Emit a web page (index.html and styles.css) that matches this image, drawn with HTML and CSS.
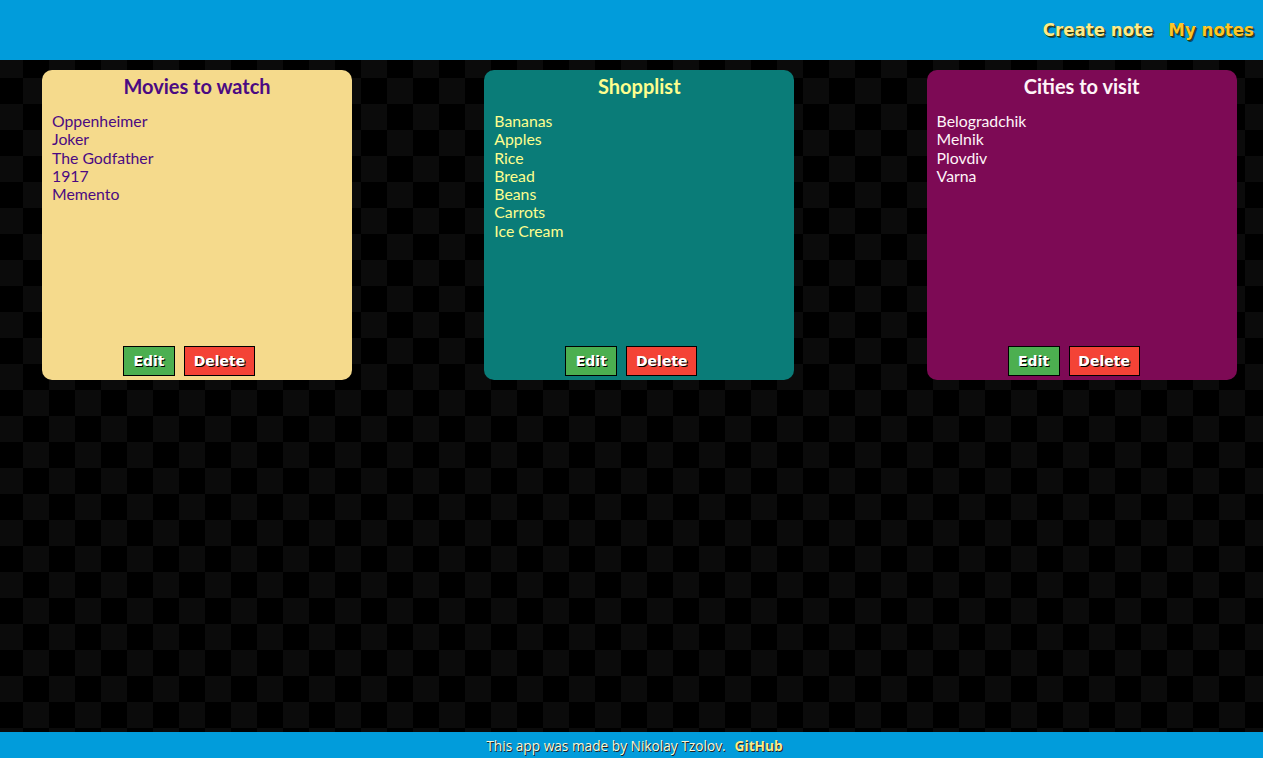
FILE: index.html
```html
<!DOCTYPE html>
<html>
<head>
<meta charset="utf-8">
<link rel="stylesheet" href="styles.css">
</head>
<body>
<header class="topbar">
  <nav class="nav">
    <a class="nav-link create" href="#">Create note</a>
    <a class="nav-link mine" href="#">My notes</a>
  </nav>
</header>
<main class="board">
  <section class="note note-yellow">
    <h2 class="note-title">Movies to watch</h2>
    <div class="note-body">
      <div>Oppenheimer</div>
      <div>Joker</div>
      <div>The Godfather</div>
      <div>1917</div>
      <div>Memento</div>
    </div>
    <div class="note-actions">
      <button class="btn btn-edit">Edit</button>
      <button class="btn btn-delete">Delete</button>
    </div>
  </section>
  <section class="note note-teal">
    <h2 class="note-title">Shopplist</h2>
    <div class="note-body">
      <div>Bananas</div>
      <div>Apples</div>
      <div>Rice</div>
      <div>Bread</div>
      <div>Beans</div>
      <div>Carrots</div>
      <div>Ice Cream</div>
    </div>
    <div class="note-actions">
      <button class="btn btn-edit">Edit</button>
      <button class="btn btn-delete">Delete</button>
    </div>
  </section>
  <section class="note note-purple">
    <h2 class="note-title">Cities to visit</h2>
    <div class="note-body">
      <div>Belogradchik</div>
      <div>Melnik</div>
      <div>Plovdiv</div>
      <div>Varna</div>
    </div>
    <div class="note-actions">
      <button class="btn btn-edit">Edit</button>
      <button class="btn btn-delete">Delete</button>
    </div>
  </section>
</main>
<footer class="footer">
  <span class="footer-text">This app was made by Nikolay Tzolov.</span>
  <a class="footer-link" href="#">GitHub</a>
</footer>
</body>
</html>
```
FILE: styles.css
```css
* { box-sizing: border-box; }
html, body { margin: 0; padding: 0; height: 100%; }
body {
  display: flex;
  flex-direction: column;
  min-height: 758px;
  background-color: #000;
  background-image: conic-gradient(#000 25%, #0b0b0b 0 50%, #000 0 75%, #0b0b0b 0);
  background-size: 52px 52px;
  background-position: -3px 0;
  font-family: "Lato", "Open Sans", sans-serif;
}
.topbar {
  height: 60px;
  background: #019cdb;
  display: flex;
  justify-content: flex-end;
  align-items: center;
  padding-right: 9px;
}
.nav { display: flex; gap: 15px; padding-bottom: 2px; }
.nav-link {
  font-family: "DejaVu Sans Condensed", "DejaVu Sans", sans-serif;
  font-stretch: condensed;
  font-weight: bold;
  font-size: 18.5px;
  text-decoration: none;
  text-shadow: 1px 1px 0 #3a3a00, 2px 2px 0 rgba(0,0,0,0.5);
}
.create { color: #fde98a; }
.mine { color: #fec52a; }
.board {
  flex: 1;
  display: flex;
  justify-content: space-between;
  align-items: flex-start;
  padding: 10px 26.4px 0 42px;
}
.note {
  width: 310px;
  height: 310px;
  border-radius: 10px;
  display: flex;
  flex-direction: column;
  padding: 0 10px 4px;
}
.note-yellow { background: #f5da8c; color: #4b0a82; }
.note-teal { background: #0a7c78; color: #fefe8e; }
.note-purple { background: #7d0a55; color: #fff4f8; }
.note-title {
  margin: 4px 0 0;
  text-align: center;
  font-size: 20px;
  font-weight: bold;
  line-height: 24px;
}
.note-body {
  flex: 1;
  margin-top: 14px;
  font-size: 15.8px;
  line-height: 18.3px;
}
.note-actions {
  display: flex;
  justify-content: center;
  gap: 9px;
  padding-right: 16px;
}
.btn {
  height: 30px;
  border: 1px solid #000;
  color: #fff;
  font-family: "DejaVu Sans", sans-serif;
  font-weight: bold;
  font-size: 14px;
  text-shadow: 1px 1px 0 #000;
  padding: 0;
  cursor: pointer;
}
.btn-edit { background: #4caf50; width: 52px; }
.btn-delete { background: #f44336; width: 71px; }
.footer {
  height: 26px;
  background: #019cdb;
  display: flex;
  justify-content: center;
  align-items: center;
  gap: 9px;
  font-family: "Open Sans", sans-serif;
  font-size: 13.7px;
  padding-left: 6px;
}
.footer-text { color: #fbf6d8; text-shadow: 1px 1px 0 #222; }
.footer-link { color: #fdea8c; font-weight: bold; text-decoration: none; text-shadow: 1px 1px 0 #222; }
```
